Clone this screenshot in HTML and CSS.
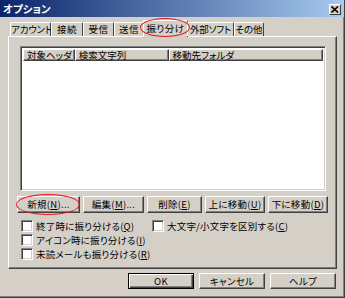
FILE: index.html
```html
<!DOCTYPE html>
<html lang="ja">
<head>
<meta charset="utf-8">
<link rel="stylesheet" href="styles.css">
</head>
<body>
<div class="window">
  <div class="titlebar">
    <span class="title">オプション</span>
    <span class="close"><svg width="8" height="7" viewBox="0 0 8 7"><path d="M0.5 0.5 L7 6.5 M7 0.5 L0.5 6.5" stroke="#000" stroke-width="1.6" fill="none"/></svg></span>
  </div>
  <div class="content">
    <div class="tabs">
      <div class="tab t1">アカウント</div>
      <div class="tab t2">接続</div>
      <div class="tab t3">受信</div>
      <div class="tab t4">送信</div>
      <div class="tab active t5">振り分け</div>
      <div class="tab t6">外部ソフト</div>
      <div class="tab t7">その他</div>
    </div>
    <div class="panel">
      <div class="list">
        <div class="header">
          <div class="col c1">対象ヘッダ</div>
          <div class="col c2">検索文字列</div>
          <div class="col c3">移動先フォルダ</div>
        </div>
      </div>
      <div class="btnrow">
        <div class="btn b1">新規(<u>N</u>)...</div>
        <div class="btn b2">編集(<u>M</u>)...</div>
        <div class="btn b3">削除(<u>E</u>)</div>
        <div class="btn b4">上に移動(<u>U</u>)</div>
        <div class="btn b5">下に移動(<u>D</u>)</div>
      </div>
      <div class="checks">
        <div class="checkcol first">
          <label class="chk"><span class="box"></span>終了時に振り分ける(<u>Q</u>)</label>
          <label class="chk"><span class="box"></span>アイコン時に振り分ける(<u>I</u>)</label>
          <label class="chk"><span class="box"></span>未読メールも振り分ける(<u>R</u>)</label>
        </div>
        <div class="checkcol">
          <label class="chk"><span class="box"></span>大文字/小文字を区別する(<u>C</u>)</label>
        </div>
      </div>
    </div>
    <div class="footer">
      <div class="btn fbtn default">OK</div>
      <div class="btn fbtn">キャンセル</div>
      <div class="btn fbtn">ヘルプ</div>
    </div>
  </div>
  <div class="ring ring-tab"></div>
  <div class="ring ring-new"></div>
</div>
</body>
</html>
```

FILE: styles.css
```css
html, body {
  margin: 0;
  padding: 0;
  background: #d4d0c8;
}
body {
  font-family: "Noto Sans CJK JP", "Noto Sans", sans-serif;
  font-size: 9.5px;
  line-height: 11px;
  color: #000;
  font-feature-settings: "palt";
}
u { text-decoration: underline; text-underline-offset: 1px; }
.window {
  position: relative;
  width: 345px;
  height: 298px;
  box-sizing: border-box;
  background: #d4d0c8;
  border-right: 1px solid #404040;
  border-bottom: 1px solid #404040;
  box-shadow: inset -1px -1px 0 #808080;
  overflow: hidden;
}
.titlebar {
  height: 17px;
  background: linear-gradient(to right, #0a246a, #a6caf0);
  display: flex;
  align-items: center;
  justify-content: space-between;
  padding: 0 3px 0 3px;
  color: #fff;
}
.title {
  font-weight: bold;
  font-size: 10.5px;
}
.close {
  width: 12px;
  height: 11px;
  box-sizing: border-box;
  background: #d4d0c8;
  border-top: 1px solid #fff;
  border-left: 1px solid #fff;
  border-right: 1px solid #404040;
  border-bottom: 1px solid #404040;
  display: flex;
  align-items: center;
  justify-content: center;
  margin-top: 1px;
}
.content {
  padding: 4px 8px 0 8px;
}
.tabs {
  display: flex;
  align-items: flex-end;
  height: 15px;
  padding-left: 2px;
  position: relative;
  z-index: 2;
}
.tab {
  height: 14px;
  box-sizing: border-box;
  border-top: 1px solid #fff;
  border-left: 1px solid #fff;
  border-right: 1px solid #404040;
  border-radius: 2px 2px 0 0;
  padding: 1px 0 0 0;
  white-space: nowrap;
  line-height: 11px;
  letter-spacing: 0.5px;
  text-align: center;
  flex: none;
}
.t1 { width: 41px; letter-spacing: -0.2px; }
.t2 { width: 32px; }
.t3 { width: 31px; }
.t4 { width: 30px; }
.t5 { width: 45px; }
.t6 { width: 47px; letter-spacing: -0.2px; }
.t7 { width: 30px; letter-spacing: 0; }
.tab.active {
  height: 17px;
  margin: 0 -1px -1px -1px;
  padding-top: 2px;
  background: #d4d0c8;
}
.panel {
  height: 233px;
  box-sizing: border-box;
  border-top: 1px solid #fff;
  border-left: 1px solid #fff;
  border-right: 1px solid #404040;
  border-bottom: 1px solid #404040;
  box-shadow: inset -1px -1px 0 #808080;
  padding: 9px 0 0 8px;
  width: 329px;
}
.list {
  margin-left: 3px;
  width: 306px;
  height: 145px;
  box-sizing: border-box;
  background: #fff;
  border-top: 1px solid #808080;
  border-left: 1px solid #808080;
  border-right: 1px solid #fff;
  border-bottom: 1px solid #fff;
  box-shadow: inset 1px 1px 0 #404040, inset -1px -1px 0 #d4d0c8;
  padding: 2px 2px 0 2px;
}
.header {
  display: flex;
  height: 12px;
}
.col {
  box-sizing: border-box;
  background: #d4d0c8;
  border-top: 1px solid #fff;
  border-left: 1px solid #fff;
  border-right: 1px solid #404040;
  border-bottom: 1px solid #404040;
  box-shadow: inset -1px -1px 0 #808080;
  padding: 0 0 0 3px;
  line-height: 10px;
  white-space: nowrap;
  overflow: hidden;
}
.c1 { width: 52px; }
.c2 { width: 94px; }
.c3 { width: 155px; }
.btnrow {
  display: flex;
  gap: 3px;
  margin-top: 5px;
}
.btn {
  height: 17px;
  box-sizing: border-box;
  border-top: 1px solid #fff;
  border-left: 1px solid #fff;
  border-right: 1px solid #404040;
  border-bottom: 1px solid #404040;
  box-shadow: inset -1px -1px 0 #808080;
  display: flex;
  align-items: center;
  justify-content: center;
  white-space: nowrap;
  line-height: 11px;
  letter-spacing: 0.3px;
}
.b1 { width: 63px; }
.b2 { width: 61px; }
.b3 { width: 55px; }
.b4 { width: 60px; }
.b5 { width: 60px; }
.checks {
  display: flex;
  margin-top: 7px;
  padding-left: 4px;
}
.checkcol {
  display: flex;
  flex-direction: column;
  gap: 2px;
}
.checkcol.first { width: 131px; }
.chk {
  display: flex;
  align-items: center;
  height: 12px;
  white-space: nowrap;
  letter-spacing: 0.2px;
}
.box {
  width: 12px;
  height: 12px;
  box-sizing: border-box;
  background: #fff;
  border-top: 1px solid #808080;
  border-left: 1px solid #808080;
  border-right: 1px solid #fff;
  border-bottom: 1px solid #fff;
  box-shadow: inset 1px 1px 0 #404040, inset -1px -1px 0 #d4d0c8;
  margin-right: 3px;
  flex: none;
}
.footer {
  display: flex;
  justify-content: flex-end;
  gap: 5px;
  margin-top: 4px;
}
.fbtn {
  width: 66px;
  height: 16px;
}
.fbtn.default {
  border: 1px solid #000;
  box-shadow: inset 1px 1px 0 #fff, inset -1px -1px 0 #404040, inset -2px -2px 0 #808080;
}
.ring {
  position: absolute;
  border: 1.5px solid #e8141c;
  border-radius: 50%;
  box-sizing: border-box;
  z-index: 5;
}
.ring-tab {
  left: 140px;
  top: 18px;
  width: 50px;
  height: 19px;
}
.ring-new {
  left: 16px;
  top: 194px;
  width: 64px;
  height: 21px;
}
```
